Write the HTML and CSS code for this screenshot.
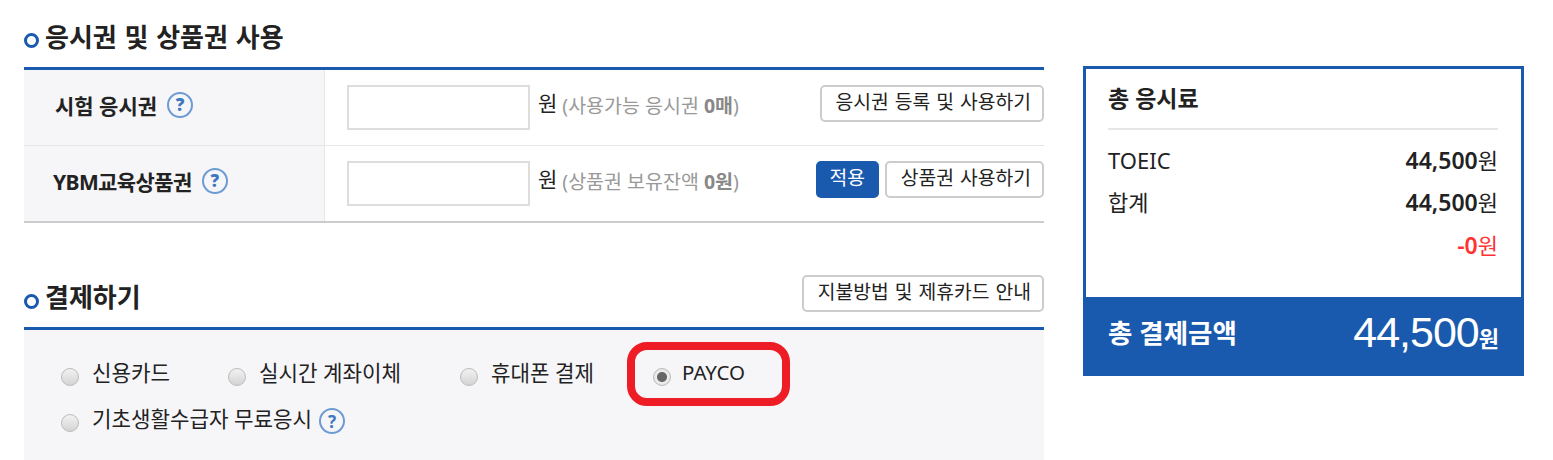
FILE: index.html
```html
<!DOCTYPE html>
<html lang="ko">
<head>
  <meta charset="UTF-8">
  <title>결제하기</title>
  <link rel="stylesheet" href="styles.css">
</head>
<body>
  <div class="page">
    <main class="left">
      <h2 class="sec-title first"><i class="dot"></i>응시권 및 상품권 사용</h2>
      <div class="ticket">
        <div class="row">
          <div class="th"><span class="th-a">시험 응시권</span><span class="help"><b>?</b></span></div>
          <div class="td">
            <input class="won" type="text">
            <span class="unit">원</span>
            <span class="note">(사용가능 응시권 <b>0매</b>)</span>
            <div class="btns"><button class="btn">응시권 등록 및 사용하기</button></div>
          </div>
        </div>
        <div class="row">
          <div class="th"><span class="th-b">YBM교육상품권</span><span class="help"><b>?</b></span></div>
          <div class="td">
            <input class="won" type="text">
            <span class="unit">원</span>
            <span class="note">(상품권 보유잔액 <b>0원</b>)</span>
            <div class="btns"><button class="btn blue">적용</button><button class="btn">상품권 사용하기</button></div>
          </div>
        </div>
      </div>
      <div class="pay-head">
        <h2 class="sec-title"><i class="dot"></i>결제하기</h2>
        <button class="btn">지불방법 및 제휴카드 안내</button>
      </div>
      <div class="pay">
        <div class="pay-line">
          <label class="opt o1"><input type="radio" name="pay">신용카드</label>
          <label class="opt o2"><input type="radio" name="pay">실시간 계좌이체</label>
          <label class="opt o3"><input type="radio" name="pay">휴대폰 결제</label>
          <label class="opt payco"><input type="radio" name="pay" checked>PAYCO</label>
        </div>
        <div class="pay-line">
          <label class="opt"><input type="radio" name="pay">기초생활수급자 무료응시</label><span class="help small"><b>?</b></span>
        </div>
        <div class="mark"></div>
      </div>
    </main>
    <aside class="total">
      <div class="total-body">
        <h3>총 응시료</h3>
        <ul>
          <li><span>TOEIC</span><span><b>44,500</b>원</span></li>
          <li><span>합계</span><span><b>44,500</b>원</span></li>
          <li class="minus"><span></span><span><b>-0</b>원</span></li>
        </ul>
      </div>
      <div class="total-foot">
        <strong>총 결제금액</strong>
        <span class="sum">44,500<b>원</b></span>
      </div>
    </aside>
  </div>
</body>
</html>
```

FILE: styles.css
```css
* {
  box-sizing: border-box;
}
html, body {
  margin: 0;
  height: 460px;
  overflow: hidden;
  background: #fff;
}
body {
  font-family: "Noto Sans", "Noto Sans CJK KR", sans-serif;
  color: #222;
  font-size: 20px;
}
.page {
  display: flex;
  align-items: flex-start;
  gap: 39px;
  padding-left: 24px;
}
.left {
  width: 1020px;
}
.sec-title {
  display: flex;
  align-items: center;
  margin: 0;
  height: 37px;
  font-size: 26px;
  font-weight: 700;
  word-spacing: 1px;
}
.sec-title.first {
  margin-top: 17px;
  margin-bottom: 13px;
}
.dot {
  width: 15px;
  height: 15px;
  margin: 9px 6px 0 0;
  border: 3px solid #1a5aae;
  border-radius: 50%;
}
.ticket {
  border-top: 3px solid #1a5aae;
  border-bottom: 2px solid #ccc;
}
.row {
  display: flex;
  height: 75px;
}
.row + .row {
  height: 76px;
  border-top: 1px solid #e6e6e6;
}
.th {
  width: 301px;
  background: #f6f6f9;
  border-right: 1px solid #e6e6e6;
  display: flex;
  align-items: center;
  padding-bottom: 6px;
  font-size: 21px;
  font-weight: 700;
}
.th-a {
  margin-left: 31px;
}
.th-b {
  margin-left: 29px;
  letter-spacing: -0.6px;
}
.help {
  display: inline-flex;
  align-items: center;
  justify-content: center;
  width: 26px;
  height: 26px;
  margin-left: 10px;
  border: 2px solid #6c9ad3;
  border-radius: 50%;
  color: #3f78bf;
  font-size: 17px;
  line-height: 1;
}
.td {
  flex: 1;
  display: flex;
  align-items: flex-start;
  padding: 15px 0 0 22px;
}
.won {
  width: 183px;
  height: 45px;
  border: 2px solid #ddd;
  background: #fff;
  margin: 0;
}
.unit {
  margin-left: 8px;
  font-size: 21px;
  line-height: 37px;
}
.note {
  margin-left: 5px;
  font-size: 19.5px;
  line-height: 42px;
  color: #999;
}
.note b {
  color: #888;
}
.btns {
  margin-left: auto;
  display: flex;
  gap: 6px;
}
.btn {
  height: 37px;
  padding: 0 11px 5px 14px;
  border: 2px solid #ccc;
  border-radius: 5px;
  background: #fff;
  color: #222;
  font-family: inherit;
  font-size: 19.3px;
  word-spacing: 1px;
}
.btn.blue {
  width: 63px;
  padding: 0 0 5px;
  border-color: #1a5aae;
  background: #1a5aae;
  color: #fff;
}
.pay-head {
  display: flex;
  justify-content: space-between;
  align-items: flex-start;
  margin-top: 52px;
  height: 52px;
}
.pay-head .sec-title {
  margin-top: 2px;
}
.pay-head .dot {
  margin-top: 12px;
}
.pay {
  position: relative;
  height: 133px;
  border-top: 3px solid #1a5aae;
  background: #f6f6f9;
  padding: 22px 0 0 37px;
}
.pay-line {
  display: flex;
  align-items: center;
  height: 46px;
}
.opt {
  display: inline-flex;
  align-items: center;
  font-size: 21.2px;
  padding-bottom: 7px;
}
.opt input {
  appearance: none;
  flex: none;
  width: 18px;
  height: 18px;
  margin: 10px 13px 0 0;
  border: 1px solid #bbb;
  border-radius: 50%;
  background: linear-gradient(#f2f2f2, #d4d4d4);
}
.opt input:checked {
  background: radial-gradient(circle, #666 0 4.5px, #eee 5.5px, #d8d8d8 100%);
}
.o1 {
  width: 167px;
}
.o2 {
  width: 232px;
}
.o3 {
  width: 193px;
}
.payco {
  font-size: 20.5px;
}
.payco input {
  margin-right: 11px;
}
.help.small {
  margin-left: 7px;
  margin-top: 0;
}
.mark {
  position: absolute;
  left: 603px;
  top: 12px;
  width: 163px;
  height: 64px;
  border: 8px solid #ee1c25;
  border-radius: 20px;
}
.total {
  width: 441px;
  margin-top: 66px;
  height: 310px;
  border: 3px solid #1a5aae;
  display: flex;
  flex-direction: column;
}
.total-body {
  flex: 1;
  padding: 0 23px 0 22px;
}
.total-body h3 {
  margin: 0;
  height: 61px;
  border-bottom: 2px solid #e6e6e6;
  font-size: 23px;
  line-height: 58px;
  font-weight: 700;
}
.total-body ul {
  margin: 8.5px 0 0;
  padding: 0;
  list-style: none;
}
.total-body li {
  display: flex;
  justify-content: space-between;
  height: 42.5px;
  line-height: 42px;
  font-size: 22px;
}
.total-body li b {
  font-size: 23px;
  font-weight: 600;
}
.minus {
  color: #f33;
}
.total-foot {
  height: 79px;
  margin: 0 -3px -3px;
  padding: 0 25px;
  display: flex;
  align-items: center;
  justify-content: space-between;
  background: #1a5aae;
  color: #fff;
}
.total-foot strong {
  font-size: 26.5px;
  margin-top: -11px;
}
.sum {
  font-size: 43px;
  letter-spacing: -1px;
  margin-top: -8px;
  font-family: "Liberation Sans", sans-serif;
}
.sum b {
  font-family: "Noto Sans CJK KR", sans-serif;
  font-size: 22px;
  letter-spacing: 0;
}
```
